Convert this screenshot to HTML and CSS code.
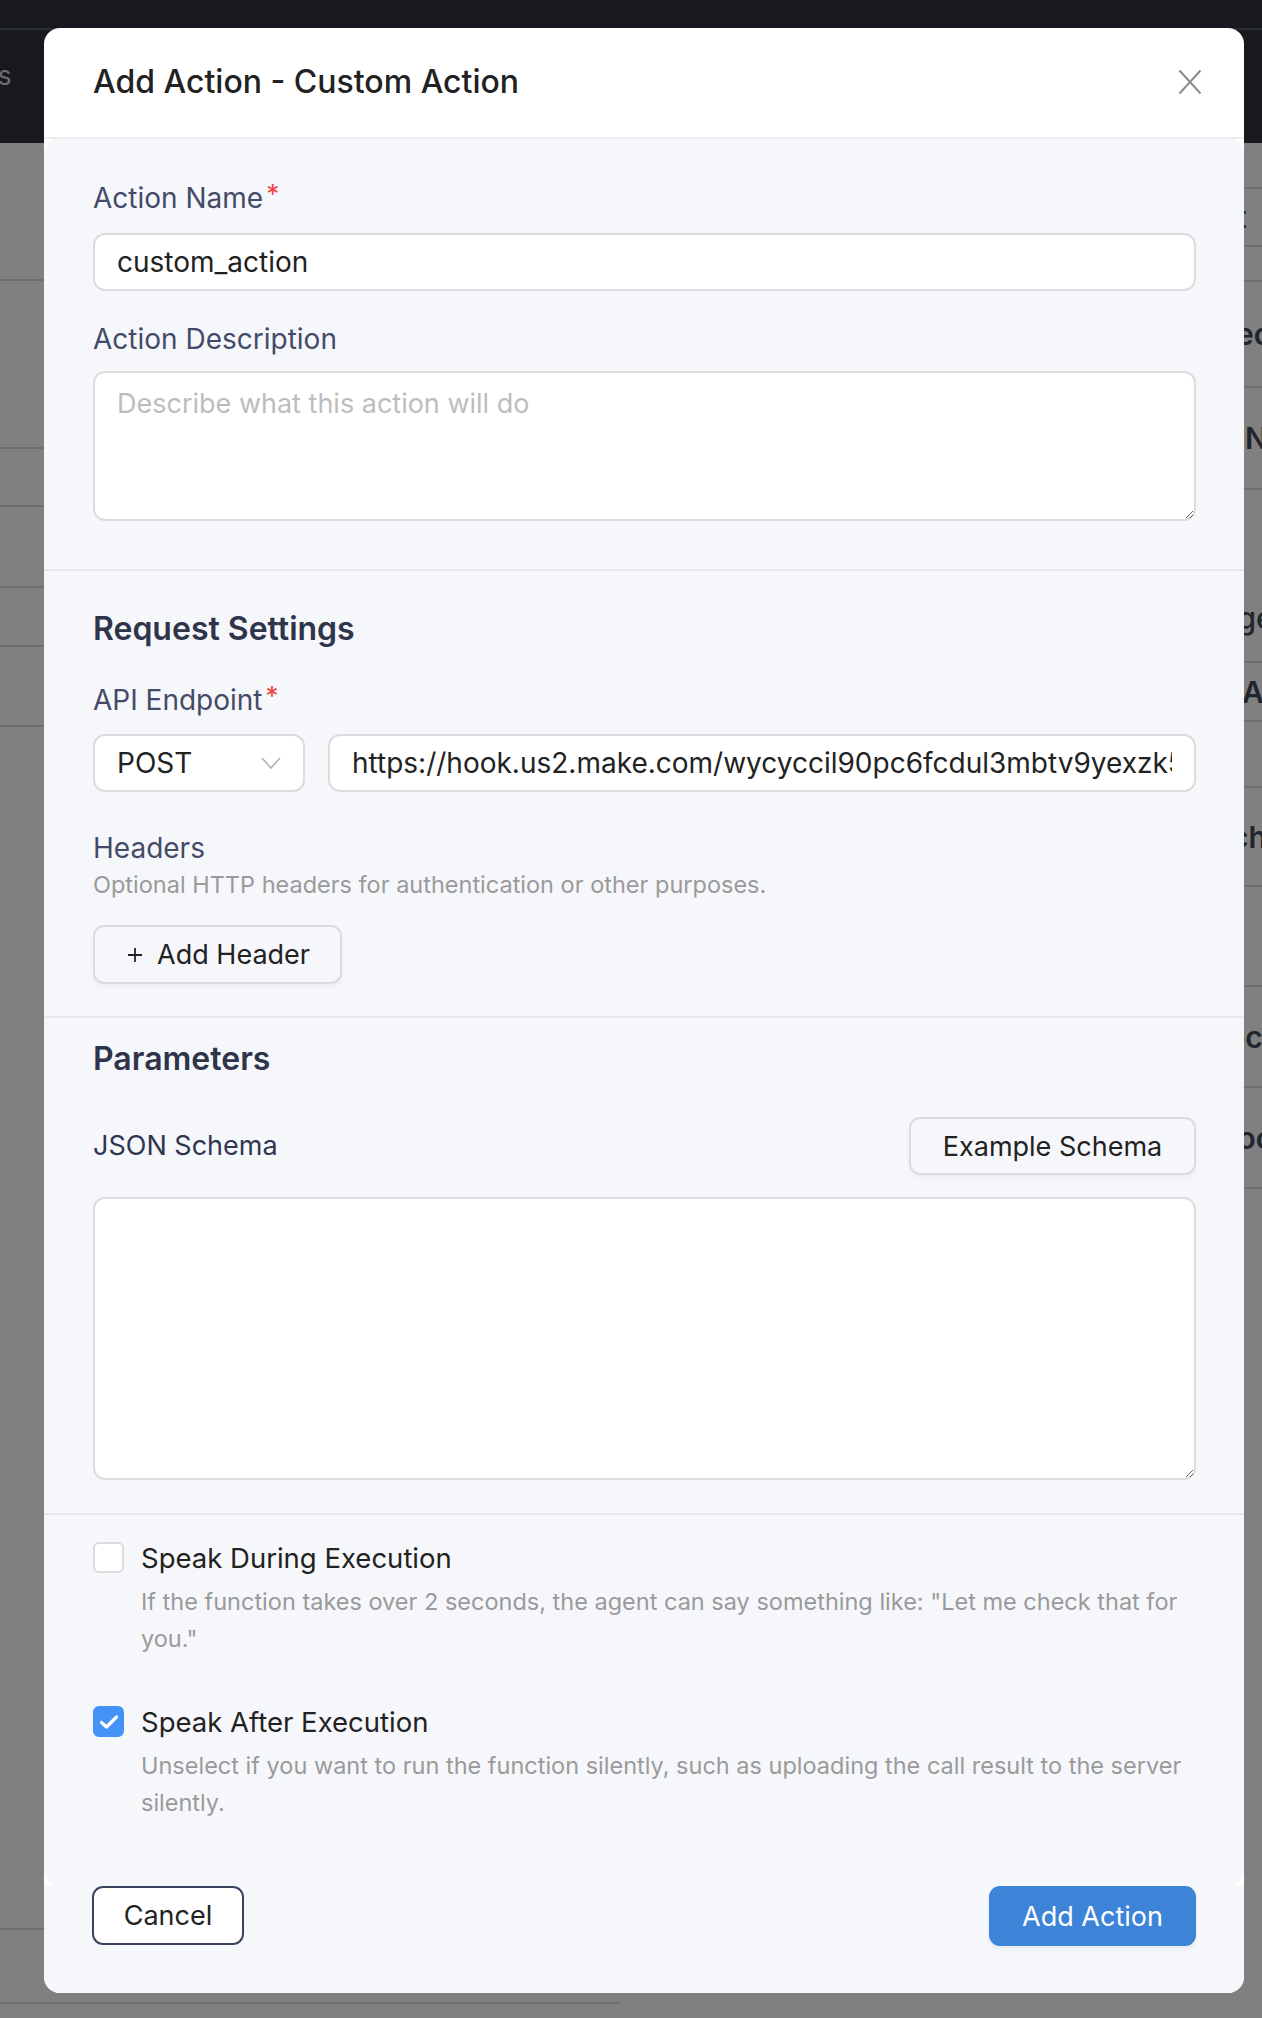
FILE: index.html
```html
<!DOCTYPE html>
<html lang="en">
<head>
<meta charset="utf-8">
<title>Add Action - Custom Action</title>
<link rel="stylesheet" href="styles.css">
</head>
<body>
<div class="bg">
  <div class="bg-nav">
    <div class="bg-nav-top"></div>
    <div class="bg-nav-main"><span class="bg-nav-text">Agents</span></div>
  </div>
  <div class="bg-body">
    <div class="bg-left">
      <div class="bg-lrow"></div>
      <div class="bg-lrow"></div>
      <div class="bg-lrow"></div>
      <div class="bg-lrow"></div>
      <div class="bg-lrow"></div>
      <div class="bg-lrow"></div>
      <div class="bg-lrow"></div>
      <div class="bg-lrow"></div>
    </div>
    <div class="bg-right">
      <div class="bg-rrow"></div>
      <div class="bg-rrow"><span>Prompt</span></div>
      <div class="bg-rrow"></div>
      <div class="bg-rrow"><span>Speech</span></div>
      <div class="bg-rrow"><span>Name</span></div>
      <div class="bg-rrow bg-rrow-double"><span>Voices</span><span>Usage</span></div>
      <div class="bg-rrow"><span>Actions</span></div>
      <div class="bg-rrow"></div>
      <div class="bg-rrow"><span>Search</span></div>
      <div class="bg-rrow"></div>
      <div class="bg-rrow"><span>Local</span></div>
      <div class="bg-rrow"><span>Tools</span></div>
      <div class="bg-rrow"></div>
    </div>
  </div>
</div>

<div class="modal" role="dialog" aria-labelledby="modal-title">
  <header class="modal-header">
    <h2 class="modal-title" id="modal-title">Add Action - Custom Action</h2>
    <button class="close-btn" type="button" aria-label="Close">
      <svg viewBox="0 0 24 26" width="24" height="26" aria-hidden="true"><path d="M1.5 1.5 L22.5 24.5 M22.5 1.5 L1.5 24.5"/></svg>
    </button>
  </header>

  <div class="modal-body">
    <section class="sec sec-basic">
      <div class="label label-req">Action Name<span class="req">*</span></div>
      <input class="input" type="text" value="custom_action">
      <div class="label label-desc">Action Description</div>
      <textarea class="textarea desc-area" placeholder="Describe what this action will do"></textarea>
    </section>

    <section class="sec sec-request">
      <h3 class="sec-title">Request Settings</h3>
      <div class="label label-req label-api">API Endpoint<span class="req">*</span></div>
      <div class="endpoint-row">
        <div class="select">
          <span>POST</span>
          <svg class="chev" viewBox="0 0 20 12" width="20" height="12" aria-hidden="true"><path d="M1 1 L10 11 L19 1"/></svg>
        </div>
        <input class="input url-input" type="text" value="https://hook.us2.make.com/wycyccil90pc6fcdul3mbtv9yexzk5bn">
      </div>
      <div class="label label-headers">Headers</div>
      <p class="help">Optional HTTP headers for authentication or other purposes.</p>
      <button class="btn btn-light btn-add-header" type="button">
        <svg class="plus" viewBox="0 0 16 16" width="16" height="16" aria-hidden="true"><path d="M8 0 V16 M0 8 H16"/></svg>
        <span>Add Header</span>
      </button>
    </section>

    <section class="sec sec-params">
      <h3 class="sec-title">Parameters</h3>
      <div class="schema-row">
        <span class="label label-inline">JSON Schema</span>
        <button class="btn btn-light btn-example" type="button">Example Schema</button>
      </div>
      <textarea class="textarea schema-area"></textarea>
    </section>

    <section class="sec sec-options">
      <div class="check-row">
        <span class="checkbox"></span>
        <div class="check-text">
          <div class="check-label">Speak During Execution</div>
          <p class="check-desc">If the function takes over 2 seconds, the agent can say something like: "Let me check that for you."</p>
        </div>
      </div>
      <div class="check-row check-row-2">
        <span class="checkbox checked">
          <svg viewBox="0 0 20 16" width="20" height="16" aria-hidden="true"><path d="M2.5 8.5 L7.5 13 L17.5 3"/></svg>
        </span>
        <div class="check-text">
          <div class="check-label">Speak After Execution</div>
          <p class="check-desc">Unselect if you want to run the function silently, such as uploading the call result to the server silently.</p>
        </div>
      </div>
    </section>
  </div>

  <footer class="modal-footer">
    <button class="btn btn-outline" type="button">Cancel</button>
    <button class="btn btn-primary" type="button">Add Action</button>
  </footer>
</div>
</body>
</html>
```

FILE: styles.css
```css
* { box-sizing: border-box; }

html, body {
  margin: 0;
  padding: 0;
}

body {
  width: 1262px;
  height: 2018px;
  overflow: hidden;
  position: relative;
  background: #808080;
  font-family: "Inter", "Noto Sans", "Liberation Sans", sans-serif;
  color: #222;
}

/* ---------- dimmed background page ---------- */
.bg {
  width: 1262px;
  height: 2018px;
  display: flex;
  flex-direction: column;
}

.bg-nav {
  height: 143px;
  background: #18191f;
  display: flex;
  flex-direction: column;
}

.bg-nav-top {
  height: 30px;
  border-bottom: 2px solid #2a2d36;
}

.bg-nav-main {
  flex: 1;
  display: flex;
  align-items: center;
}

.bg-nav-text {
  font-size: 26px;
  color: #6b6e78;
  margin-left: -75px;
  padding-bottom: 22px;
}

.bg-body {
  flex: 1;
  display: grid;
  grid-template-columns: 620px 642px;
}

.bg-left {
  display: flex;
  flex-direction: column;
}

.bg-lrow {
  border-bottom: 2px solid #6e6e6e;
}
.bg-lrow:nth-child(1) { height: 138px; }
.bg-lrow:nth-child(2) { height: 168px; }
.bg-lrow:nth-child(3) { height: 58px; }
.bg-lrow:nth-child(4) { height: 81px; }
.bg-lrow:nth-child(5) { height: 59px; }
.bg-lrow:nth-child(6) { height: 80px; }
.bg-lrow:nth-child(7) { height: 1203px; }
.bg-lrow:nth-child(8) { height: 74px; }

.bg-right {
  display: flex;
  flex-direction: column;
}

.bg-rrow {
  border-bottom: 2px solid #6e6e6e;
  display: flex;
  flex-direction: column;
  justify-content: center;
  padding-left: 612px;
  font-size: 30px;
  font-weight: 600;
  color: #23252e;
  white-space: nowrap;
  overflow: hidden;
}
.bg-rrow:nth-child(1) { height: 46px; }
.bg-rrow:nth-child(2) { height: 58px; padding-left: 523px; font-weight: 500; }
.bg-rrow:nth-child(3) { height: 35px; }
.bg-rrow:nth-child(4) { height: 106px; padding-left: 560px; }
.bg-rrow:nth-child(5) { height: 102px; padding-left: 625px; }
.bg-rrow:nth-child(6) { height: 173px; justify-content: space-around; padding-left: 520px; }
.bg-rrow:nth-child(7) { height: 59px; padding-left: 622px; }
.bg-rrow:nth-child(8) { height: 66px; }
.bg-rrow:nth-child(9) { height: 99px; padding-left: 545px; }
.bg-rrow:nth-child(10) { height: 100px; }
.bg-rrow:nth-child(11) { height: 101px; padding-left: 590px; }
.bg-rrow:nth-child(12) { height: 101px; padding-left: 600px; }
.bg-rrow:nth-child(13) { flex: 1; border-bottom: none; }

.bg-rrow-double span:first-child { padding-left: 0; }
.bg-rrow-double span:last-child { padding-left: 42px; font-weight: 500; }

/* ---------- modal ---------- */
.modal {
  position: absolute;
  left: 44px;
  top: 28px;
  width: 1200px;
  height: 1965px;
  background: #ffffff;
  border-radius: 16px;
  overflow: hidden;
  display: flex;
  flex-direction: column;
}

.modal-header {
  height: 111px;
  flex: none;
  display: flex;
  align-items: center;
  justify-content: space-between;
  padding: 0 42px 2px 49px;
  border-bottom: 2px solid #eeeeee;
}

.modal-title {
  margin: 0;
  font-size: 32px;
  font-weight: 550;
  color: #222222;
}

.close-btn {
  border: none;
  background: transparent;
  padding: 0;
  width: 24px;
  height: 26px;
  display: flex;
  cursor: pointer;
}

.close-btn svg path {
  stroke: #8c8c8c;
  stroke-width: 2;
  fill: none;
}

.modal-body {
  flex: none;
  height: 1746px;
  background: #f6f7fb;
  border-radius: 14px;
  display: flex;
  flex-direction: column;
}

.sec {
  display: flex;
  flex-direction: column;
  border-bottom: 2px solid #e6e8ee;
  padding-left: 49px;
  padding-right: 48px;
}

.sec-basic { padding-top: 41px; padding-bottom: 48px; }
.sec-request { padding-top: 38px; padding-bottom: 32px; }
.sec-params { padding-top: 21px; padding-bottom: 33px; }
.sec-options { padding-top: 25px; border-bottom: none; }

.label {
  font-size: 28px;
  line-height: 36px;
  color: #434b68;
}

.req {
  color: #ef4444;
  margin-left: 3px;
  font-size: 26px;
  vertical-align: top;
  line-height: 28px;
}

.label-req { margin-bottom: 17px; }
.label-desc { margin-top: 30px; margin-bottom: 14px; }
.label-api { margin-top: 33px; margin-bottom: 16px; }
.label-headers { margin-top: 38px; }

.sec-title {
  margin: 0;
  font-size: 32px;
  line-height: 40px;
  font-weight: 600;
  color: #2e3449;
}

.input {
  display: block;
  width: 100%;
  height: 58px;
  border: 2px solid #dcdcdf;
  border-radius: 12px;
  background: #ffffff;
  padding: 0 22px;
  font-family: inherit;
  font-size: 28px;
  color: #222222;
  outline: none;
}

.textarea {
  display: block;
  width: 100%;
  border: 2px solid #dcdcdf;
  border-radius: 12px;
  background: #ffffff;
  padding: 13px 22px;
  font-family: inherit;
  font-size: 27px;
  line-height: 36px;
  color: #222222;
  resize: vertical;
  outline: none;
}

.textarea::placeholder {
  color: #bdbdbd;
}

.desc-area { height: 150px; }
.schema-area { height: 283px; margin-top: 22px; }

.endpoint-row {
  display: flex;
  gap: 23px;
}

.select {
  flex: none;
  width: 212px;
  height: 58px;
  border: 2px solid #dcdcdf;
  border-radius: 12px;
  background: #ffffff;
  display: flex;
  align-items: center;
  justify-content: space-between;
  padding: 0 22px;
  font-size: 28px;
  color: #222222;
}

.chev path {
  stroke: #b0b0b4;
  stroke-width: 1.6;
  fill: none;
}

.url-input {
  flex: 1;
  width: auto;
  min-width: 0;
}

.help {
  margin: 1px 0 0;
  font-size: 23.5px;
  line-height: 36px;
  color: #9a9a9a;
}

.btn {
  font-family: inherit;
  height: 58px;
  border-radius: 11px;
  font-size: 27px;
  cursor: pointer;
  display: inline-flex;
  align-items: center;
  justify-content: center;
  white-space: nowrap;
}

.btn-light {
  background: #f6f7fb;
  border: 2px solid #dcdcdf;
  color: #222222;
  box-shadow: 0 3px 4px rgba(0, 0, 0, 0.04);
}

.btn-add-header {
  align-self: flex-start;
  margin-top: 22px;
  width: 249px;
  height: 59px;
  gap: 15px;
  padding: 0 30px 0 33px;
}

.plus path {
  stroke: #222222;
  stroke-width: 2;
  fill: none;
}

.schema-row {
  margin-top: 38px;
  display: flex;
  align-items: center;
  justify-content: space-between;
}

.label-inline { color: #2f3650; font-size: 27px; }

.btn-example {
  width: 287px;
  padding: 0;
}

.check-row {
  display: flex;
  gap: 17px;
  align-items: flex-start;
}

.check-row-2 { margin-top: 47px; }

.checkbox {
  flex: none;
  width: 31px;
  height: 31px;
  margin-top: 2px;
  border: 2px solid #dcdcdf;
  border-radius: 6px;
  background: #ffffff;
  display: flex;
  align-items: center;
  justify-content: center;
}

.checkbox.checked {
  background: #4592f6;
  border-color: #4592f6;
}

.checkbox.checked path {
  stroke: #ffffff;
  stroke-width: 3.2;
  fill: none;
  stroke-linecap: round;
  stroke-linejoin: round;
}

.check-text {
  flex: 1;
  padding-right: 10px;
}

.check-label {
  font-size: 27.5px;
  line-height: 36px;
  color: #222222;
}

.check-desc {
  margin: 7px 0 0;
  font-size: 23.5px;
  line-height: 37px;
  color: #9a9a9a;
}

.modal-footer {
  flex: 1;
  background: #f6f7fb;
  display: flex;
  align-items: flex-start;
  justify-content: space-between;
  padding: 1px 48px 0 48px;
}

.btn-outline {
  width: 152px;
  height: 59px;
  background: #ffffff;
  border: 2px solid #3b4260;
  border-radius: 11px;
  color: #222222;
}

.btn-primary {
  width: 207px;
  height: 60px;
  background: #3d84d9;
  border: none;
  color: #ffffff;
  box-shadow: 0 3px 4px rgba(0, 0, 0, 0.06);
}
```
